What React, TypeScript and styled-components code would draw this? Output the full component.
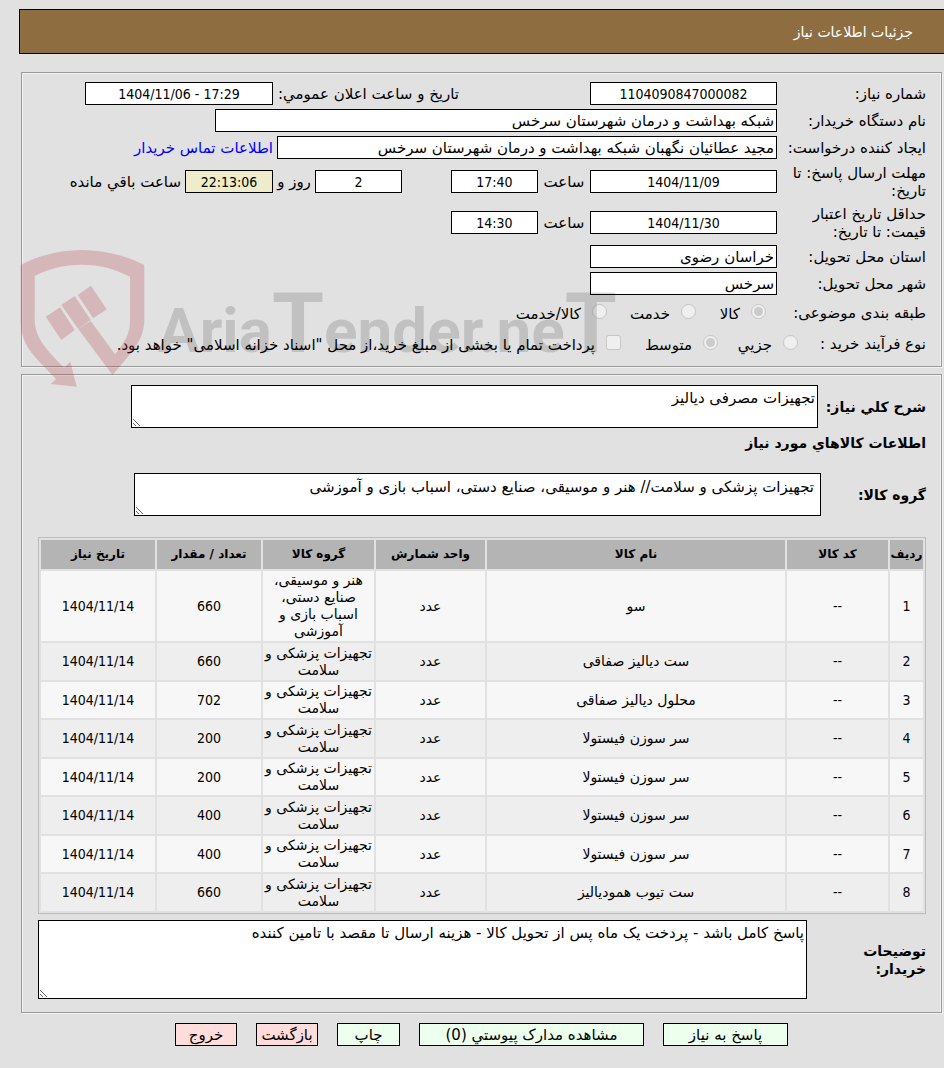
import React from "react";
import styled, { createGlobalStyle, css } from "styled-components";

const GlobalStyle = createGlobalStyle`
  * { box-sizing: border-box; }
  body {
    margin: 0;
    background: #e1e1e1;
    color: #000;
    font-family: "DejaVu Sans", sans-serif;
    font-size: 15px;
    line-height: 18px;
  }
`;

const numeric = css`
  font-family: "DejaVu Sans Condensed", "DejaVu Sans", sans-serif;
`;

const Page = styled.main`
  position: relative;
  padding: 9px 0 21px 19px;
`;

const TitleBar = styled.header`
  height: 45px;
  padding: 0 31px;
  display: flex;
  align-items: center;
  background: #8e6d41;
  border: 1px solid #000;
  border-right: 0;
  color: #fff;
`;

const Title = styled.h1`
  margin: 0;
  font-size: 14px;
  font-weight: 400;
`;

const Panel = styled.section<{ $first?: boolean }>`
  margin: ${(p) => (p.$first ? "18px 2px 0" : "7px 2px 0")};
  padding: ${(p) => (p.$first ? "7px 15px 7px 16px" : "10px 15px 13px 16px")};
  border: 1px solid #9a9a9a;
  box-shadow: inset -1px 1px 0 #f1f1f1, inset 1px 0 0 #f1f1f1, 1px 1px 0 #f1f1f1;
`;

const Row = styled.div<{ $height: number }>`
  display: flex;
  align-items: center;
  min-height: ${(p) => p.$height}px;
`;

const Label = styled.label<{ $width?: number }>`
  flex: none;
  width: ${(p) => p.$width ?? 149}px;
  padding-left: 4px;
`;

const BoldLabel = styled(Label)`
  padding-left: 0;
  font-size: 14px;
  font-weight: 700;
  white-space: nowrap;
`;

const boxed = css`
  border: 1px solid #000;
  border-radius: 0;
  background: #fff;
  color: #000;
  font: inherit;
`;

const Field = styled.input<{ $width: number }>`
  ${boxed}
  flex: 0 1 ${(p) => p.$width}px;
  min-width: 0;
  height: 23px;
  padding: 0 2px;
`;

const NumberField = styled(Field)<{ $tone?: string }>`
  ${numeric}
  background: ${(p) => p.$tone ?? "#fff"};
  font-size: 14px;
  text-align: center;
`;

const Unit = styled.span<{ $width: number }>`
  flex: none;
  width: ${(p) => p.$width}px;
  text-align: center;
`;

const Gap = styled.span<{ $width: number }>`
  flex: 0 1 ${(p) => p.$width}px;
`;

const After = styled.span`
  padding-right: 4px;
  white-space: nowrap;
`;

const SideLabel = styled.label`
  flex: none;
  width: 186px;
  white-space: nowrap;
`;

const ContactLink = styled.a`
  padding-right: 4px;
  color: #00f;
  text-decoration: none;
  white-space: nowrap;
`;

const Option = styled.label<{ $width?: number }>`
  flex: none;
  display: flex;
  align-items: center;
  gap: 11px;
  width: ${(p) => (p.$width ? `${p.$width}px` : "auto")};
  padding-top: 2px;
  white-space: nowrap;

  input {
    flex: none;
    width: 15px;
    height: 15px;
    margin: 0 0 6px;
  }
`;

const Area = styled.textarea<{ $height: number; $roomy?: boolean }>`
  ${boxed}
  display: block;
  flex: 0 1 687px;
  min-width: 0;
  height: ${(p) => p.$height}px;
  padding: ${(p) => (p.$roomy ? "4px 6px" : "3px 2px")};
  resize: both;
`;

const NoteArea = styled(Area)`
  flex: 1 1 0;
`;

const Heading = styled.h2`
  margin: 6px 0 20px;
  font-size: 14px;
  line-height: 19px;
`;

const Goods = styled.table`
  width: 100%;
  margin: 21px 0 6px;
  border: 1px solid #bcbcbc;
  border-collapse: separate;
  border-spacing: 2px;
  table-layout: fixed;
  font-size: 14px;
  line-height: 17px;
  text-align: center;

  th {
    height: 29px;
    padding: 0;
    background: #b4b4b4;
    font-size: 12px;
    white-space: nowrap;
  }
  td {
    height: 36px;
    padding: 1px;
    background: #f7f7f7;
  }
  tbody tr:nth-child(even) td {
    height: 37px;
    background: #eee;
  }
`;

const NumberCell = styled.td`
  ${numeric}
  font-size: 14px;
`;

const Actions = styled.footer`
  display: flex;
  justify-content: center;
  gap: 19px;
  margin-top: 10px;
`;

const Action = styled.button<{ $width: number; $danger?: boolean }>`
  ${boxed}
  width: ${(p) => p.$width}px;
  height: 23px;
  padding: 0;
  background: ${(p) => (p.$danger ? "#ffdddd" : "#edffed")};
  white-space: nowrap;
`;

const Mark = styled.svg`
  position: absolute;
  left: 20px;
  top: 240px;
  width: 610px;
  height: 150px;
  pointer-events: none;
`;

const goods = [
  ["سو", "هنر و موسیقی، صنایع دستی، اسباب بازی و آموزشی", "660"],
  ["ست دیالیز صفاقی", "تجهیزات پزشکی و سلامت", "660"],
  ["محلول دیالیز صفاقی", "تجهیزات پزشکی و سلامت", "702"],
  ["سر سوزن فیستولا", "تجهیزات پزشکی و سلامت", "200"],
  ["سر سوزن فیستولا", "تجهیزات پزشکی و سلامت", "200"],
  ["سر سوزن فیستولا", "تجهیزات پزشکی و سلامت", "400"],
  ["سر سوزن فیستولا", "تجهیزات پزشکی و سلامت", "400"],
  ["ست تیوب همودیالیز", "تجهیزات پزشکی و سلامت", "660"],
];

const columns = [
  { name: "ردیف", width: 33 },
  { name: "کد کالا", width: 101 },
  { name: "نام کالا" },
  { name: "واحد شمارش", width: 109 },
  { name: "گروه کالا", width: 111 },
  { name: "تعداد / مقدار", width: 104 },
  { name: "تاریخ نیاز", width: 114 },
];

function Watermark() {
  return (
    <Mark viewBox="0 0 610 150" direction="ltr" aria-hidden="true">
      <g fill="#b53d45" fillOpacity="0.25">
        <path d="M.7 25C20 15 40 10 61.7 10S104 15 124.3 25V80C124 102 111 112 92.7 135.3L58.3 89 70.7 81 95 114.3C107 100 110 92 110 80V36.7C95 29 80 24.7 61.7 24.7S28 29 14.7 36V78.3C14.7 98 25 108 44 127.7L50.3 121.7 56.7 146.7 30.7 144 36 139C12 114 .7 105 .7 80Z" />
        <path d="M25.7 76.7L40 67.3 54.7 90 41.3 100Z" />
        <path d="M41.3 65L54.7 56 70.7 80 58.3 89Z" />
        <path d="M57.7 55L71 45.7 86.7 69.3 73.3 78.3Z" />
      </g>
      <text
        x="138"
        y="112"
        fill="#000"
        fillOpacity="0.14"
        fontFamily="Roboto, sans-serif"
        fontWeight="700"
        fontSize="62"
      >
        Aria<tspan fontSize="84">T</tspan>ender.ne<tspan fontSize="84">T</tspan>
      </text>
    </Mark>
  );
}

export default function App() {
  return (
    <Page dir="rtl" lang="fa">
      <GlobalStyle />
      <TitleBar>
        <Title>جزئیات اطلاعات نیاز</Title>
      </TitleBar>

      <Panel $first>
        <Row $height={27}>
          <Label htmlFor="number">شماره نیاز:</Label>
          <NumberField id="number" $width={187} readOnly value="1104090847000082" />
          <Gap $width={131} />
          <SideLabel htmlFor="announced">تاریخ و ساعت اعلان عمومي:</SideLabel>
          <NumberField id="announced" $width={188} readOnly value="1404/11/06 - 17:29" dir="ltr" />
        </Row>
        <Row $height={27}>
          <Label htmlFor="buyer">نام دستگاه خریدار:</Label>
          <Field id="buyer" $width={562} readOnly value="شبکه بهداشت و درمان شهرستان سرخس" />
        </Row>
        <Row $height={27}>
          <Label htmlFor="creator">ایجاد کننده درخواست:</Label>
          <Field
            id="creator"
            $width={500}
            readOnly
            value="مجید عطائیان نگهبان شبکه بهداشت و درمان شهرستان سرخس"
          />
          <ContactLink href="#contact">اطلاعات تماس خریدار</ContactLink>
        </Row>
        <Row $height={41}>
          <Label htmlFor="deadline">مهلت ارسال پاسخ: تا تاریخ:</Label>
          <NumberField id="deadline" $width={187} readOnly value="1404/11/09" />
          <Unit $width={52}>ساعت</Unit>
          <NumberField $width={87} readOnly value="17:40" aria-label="ساعت" />
          <Gap $width={49} />
          <NumberField $width={87} readOnly value="2" aria-label="روز" />
          <Unit $width={42}>روز و</Unit>
          <NumberField $width={88} $tone="#eeecca" readOnly value="22:13:06" aria-label="ساعت باقي مانده" />
          <After>ساعت باقي مانده</After>
        </Row>
        <Row $height={41}>
          <Label htmlFor="validity">حداقل تاریخ اعتبار قیمت: تا تاریخ:</Label>
          <NumberField id="validity" $width={187} readOnly value="1404/11/30" />
          <Unit $width={52}>ساعت</Unit>
          <NumberField $width={87} readOnly value="14:30" aria-label="ساعت" />
        </Row>
        <Row $height={27}>
          <Label htmlFor="province">استان محل تحویل:</Label>
          <Field id="province" $width={187} readOnly value="خراسان رضوی" />
        </Row>
        <Row $height={27}>
          <Label htmlFor="city">شهر محل تحویل:</Label>
          <Field id="city" $width={187} readOnly value="سرخس" />
        </Row>
        <Row $height={32}>
          <Label as="span" $width={160}>طبقه بندی موضوعی:</Label>
          <Option $width={70}>
            <input type="radio" name="category" disabled defaultChecked />
            کالا
          </Option>
          <Option $width={89}>
            <input type="radio" name="category" disabled />
            خدمت
          </Option>
          <Option>
            <input type="radio" name="category" disabled />
            کالا/خدمت
          </Option>
        </Row>
        <Row $height={30}>
          <Label as="span" $width={128}>نوع فرآیند خرید :</Label>
          <Option $width={80}>
            <input type="radio" name="process" disabled />
            جزیي
          </Option>
          <Option $width={97}>
            <input type="radio" name="process" disabled defaultChecked />
            متوسط
          </Option>
          <Option>
            <input type="checkbox" disabled />
            پرداخت تمام یا بخشی از مبلغ خرید،از محل "اسناد خزانه اسلامی" خواهد بود.
          </Option>
        </Row>
      </Panel>

      <Panel>
        <Row $height={43}>
          <BoldLabel htmlFor="summary" $width={108}>شرح کلي نیاز:</BoldLabel>
          <Area id="summary" $height={43} readOnly value="تجهیزات مصرفی دیالیز" />
        </Row>
        <Heading>اطلاعات کالاهاي مورد نیاز</Heading>
        <Row $height={43}>
          <BoldLabel htmlFor="group" $width={105}>گروه کالا:</BoldLabel>
          <Area
            id="group"
            $height={43}
            $roomy
            readOnly
            value="تجهیزات پزشکی و سلامت// هنر و موسیقی، صنایع دستی، اسباب بازی و آموزشی"
          />
        </Row>
        <Goods>
          <colgroup>
            {columns.map((c) => (
              <col key={c.name} width={c.width} />
            ))}
          </colgroup>
          <thead>
            <tr>
              {columns.map((c) => (
                <th key={c.name} scope="col">{c.name}</th>
              ))}
            </tr>
          </thead>
          <tbody>
            {goods.map(([name, group, count], i) => (
              <tr key={i}>
                <NumberCell>{i + 1}</NumberCell>
                <NumberCell>--</NumberCell>
                <td>{name}</td>
                <td>عدد</td>
                <td>{group}</td>
                <NumberCell>{count}</NumberCell>
                <NumberCell>1404/11/14</NumberCell>
              </tr>
            ))}
          </tbody>
        </Goods>
        <Row $height={79}>
          <BoldLabel htmlFor="notes" $width={119}>
            توضیحات
            <br />
            خریدار:
          </BoldLabel>
          <NoteArea
            id="notes"
            $height={79}
            readOnly
            value="پاسخ کامل باشد - پردخت یک ماه پس از تحویل کالا - هزینه ارسال تا مقصد با تامین کننده"
          />
        </Row>
      </Panel>

      <Actions>
        <Action type="button" $width={125}>پاسخ به نیاز</Action>
        <Action type="button" $width={225}>مشاهده مدارک پیوستي (0)</Action>
        <Action type="button" $width={63}>چاپ</Action>
        <Action type="button" $width={62} $danger>بازگشت</Action>
        <Action type="button" $width={62} $danger>خروج</Action>
      </Actions>
      <Watermark />
    </Page>
  );
}
